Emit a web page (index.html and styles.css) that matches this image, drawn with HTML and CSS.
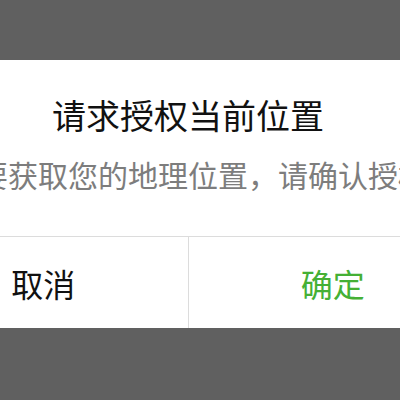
FILE: index.html
```html
<!DOCTYPE html>
<html lang="zh-CN">
<head>
<meta charset="utf-8">
<link rel="stylesheet" href="styles.css">
</head>
<body>
<div class="dialog">
  <div class="body">
    <div class="title">请求授权当前位置</div>
    <div class="msg">需要获取您的地理位置，请确认授权</div>
  </div>
  <div class="actions">
    <div class="btn cancel">取消</div>
    <div class="btn ok">确定</div>
  </div>
</div>
</body>
</html>
```
FILE: styles.css
```css
html, body {
  margin: 0;
  height: 400px;
  overflow: hidden;
  background: #606060;
}
body {
  font-family: "Noto Sans CJK SC", "Noto Sans", sans-serif;
  padding-top: 60px;
  box-sizing: border-box;
}
.dialog {
  margin-left: -101px;
  width: 578px;
  background: #ffffff;
}
.body {
  padding: 38px 0 47px;
  text-align: center;
  border-bottom: 1px solid #dcdcdc;
}
.title {
  font-size: 34px;
  line-height: 34px;
  color: #111111;
  white-space: nowrap;
}
.msg {
  margin-top: 27px;
  font-size: 30px;
  line-height: 30px;
  color: #7d7d7d;
  white-space: nowrap;
}
.actions {
  display: flex;
  height: 91px;
}
.btn {
  flex: 1;
  display: flex;
  align-items: center;
  justify-content: center;
  font-size: 32px;
}
.cancel {
  color: #111111;
  border-right: 1px solid #dcdcdc;
}
.ok {
  color: #45b035;
}
```
